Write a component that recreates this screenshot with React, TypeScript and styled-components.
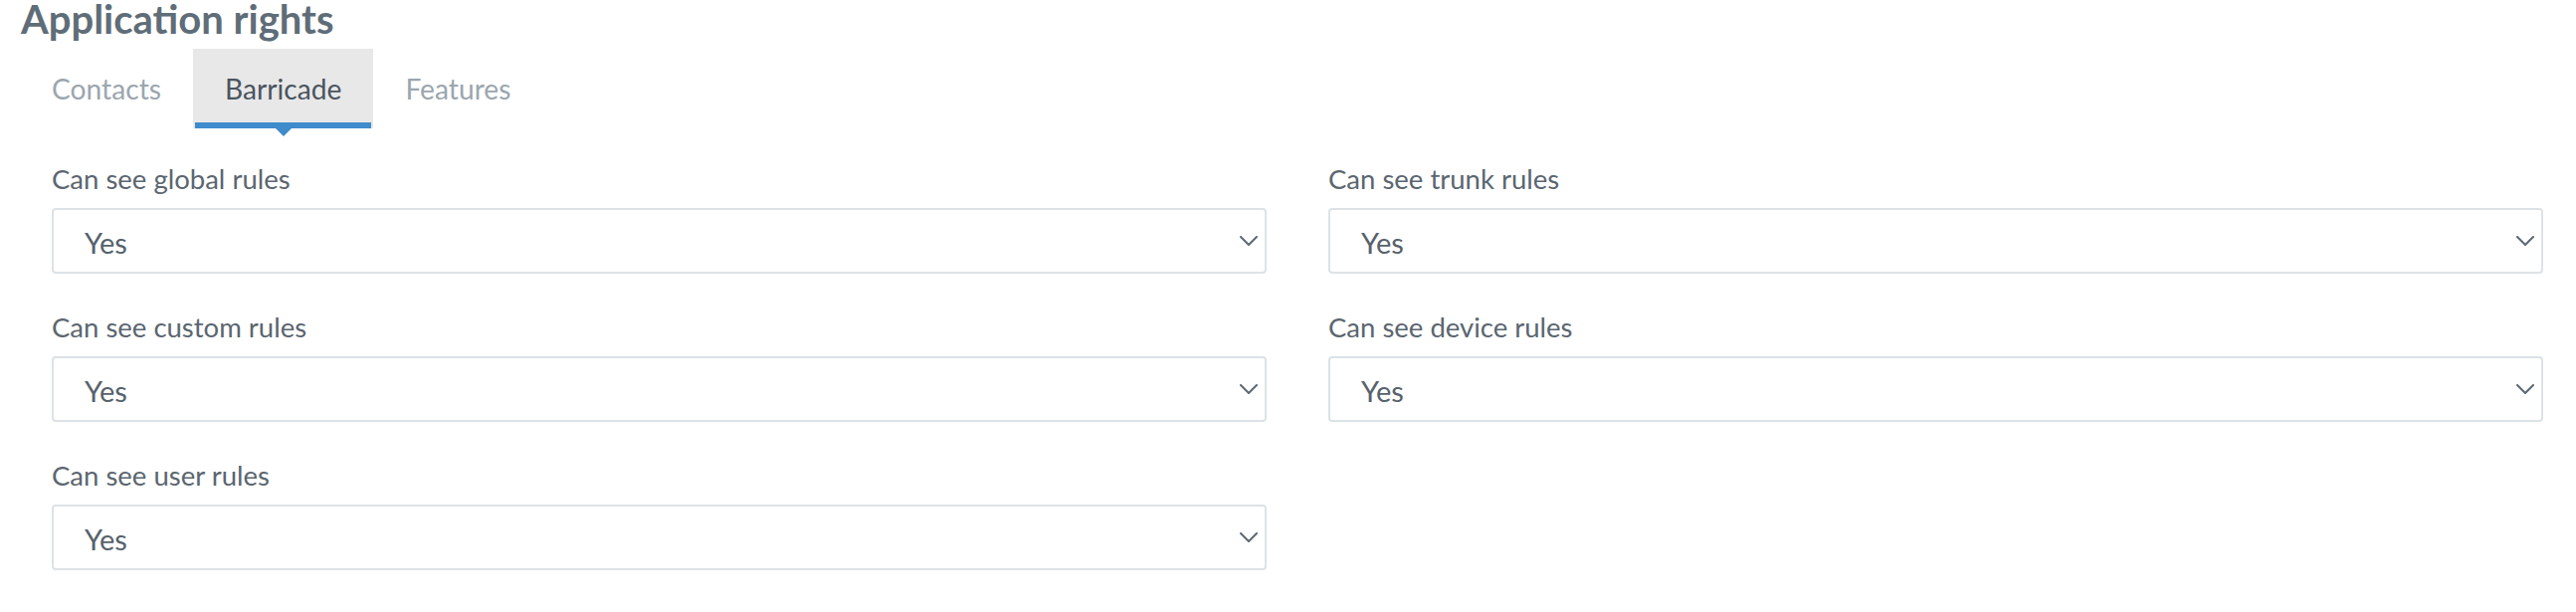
import React from "react";
import styled, { createGlobalStyle } from "styled-components";

const GlobalStyle = createGlobalStyle`
  html, body {
    margin: 0;
    padding: 0;
    background: #fff;
    font-family: Lato, "Open Sans", sans-serif;
  }
`;

interface Field {
  label: string;
  value: string;
}

const fields: Field[] = [
  { label: "Can see global rules", value: "Yes" },
  { label: "Can see trunk rules", value: "Yes" },
  { label: "Can see custom rules", value: "Yes" },
  { label: "Can see device rules", value: "Yes" },
  { label: "Can see user rules", value: "Yes" }
];

const tabs = ["Contacts", "Barricade", "Features"];

const Chevron = () => (
  <svg width="18" height="10" viewBox="0 0 18 10" fill="none">
    <path
      d="M1 1 L9 9 L17 1"
      stroke="#5c6873"
      strokeWidth="2"
      strokeLinecap="round"
      strokeLinejoin="round"
    />
  </svg>
);

const App: React.FC = () => {
  return (
    <Page>
      <GlobalStyle />
      <Title>Application rights</Title>
      <TabList>
        {tabs.map(t => (
          <Tab key={t} active={t === "Barricade"}>
            {t}
          </Tab>
        ))}
      </TabList>
      <Form>
        {fields.map(f => (
          <FieldWrap key={f.label}>
            <Label>{f.label}</Label>
            <SelectBox>
              <span>{f.value}</span>
              <Chevron />
            </SelectBox>
          </FieldWrap>
        ))}
      </Form>
    </Page>
  );
};

const Page = styled.div`
  width: 2589px;
  height: 615px;
  box-sizing: border-box;
  overflow: hidden;
  padding-top: 2px;
`;

const Title = styled.h1`
  margin: 0;
  padding-left: 21px;
  font-size: 40px;
  line-height: 34px;
  font-weight: 700;
  color: #5f6d78;
`;

const TabList = styled.div`
  display: flex;
  margin: 13px 0 0 20px;
`;

const Tab = styled.div<{ active?: boolean }>`
  position: relative;
  padding: 18px 32px 18px;
  font-size: 28.2px;
  line-height: 44px;
  color: ${p => (p.active ? "#4a5560" : "#9ba6ae")};
  background: ${p => (p.active ? "#e8e8e8" : "transparent")};

  ${p =>
    p.active &&
    `
    &::after {
      content: "";
      position: absolute;
      left: 2px;
      right: 2px;
      bottom: 0;
      height: 6px;
      background: #3f8bcb;
    }
    &::before {
      content: "";
      position: absolute;
      left: 50%;
      bottom: -8px;
      margin-left: -8px;
      border-left: 8px solid transparent;
      border-right: 8px solid transparent;
      border-top: 8px solid #3f8bcb;
    }
  `}
`;

const Form = styled.div`
  display: grid;
  grid-template-columns: 1fr 1fr;
  column-gap: 62px;
  row-gap: 34px;
  padding: 31px 33px 0 52px;
`;

const FieldWrap = styled.div`
  display: flex;
  flex-direction: column;
`;

const Label = styled.div`
  font-size: 27.5px;
  line-height: 40px;
  color: #5b6670;
  margin-bottom: 9px;
`;

const SelectBox = styled.div`
  display: flex;
  align-items: center;
  justify-content: space-between;
  height: 66px;
  box-sizing: border-box;
  border: 2px solid #dde2e6;
  border-radius: 4px;
  padding: 0 7px 0 31px;
  font-size: 29px;
  color: #56626c;
  background: #fff;

  span {
    padding-top: 2px;
  }
`;

export default App;
